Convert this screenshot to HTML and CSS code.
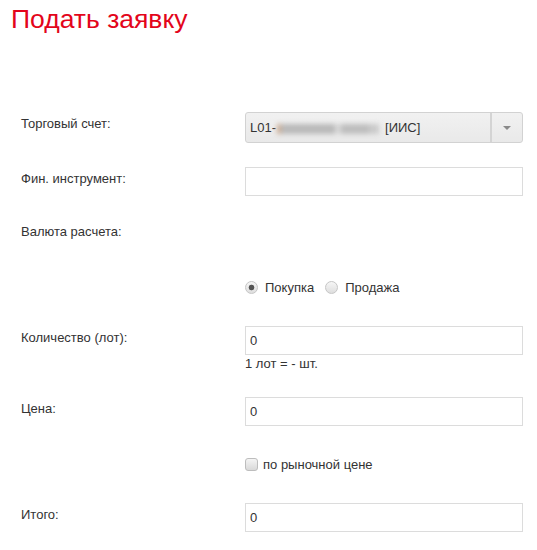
FILE: index.html
```html
<!DOCTYPE html>
<html lang="ru">
<head>
    <meta charset="UTF-8">
    <meta name="viewport" content="width=device-width, initial-scale=1.0">
    <title>Подать заявку</title>
    <link rel="stylesheet" href="styles.css">
</head>
<body>
    <h1 class="page-title">Подать заявку</h1>

    <form class="order-form">
        <!-- счет -->
        <div class="form-row">
            <label class="form-label">Торговый счет:</label>
            <div class="form-control">
                <div class="account-select">
                    <span class="account-value">L01-<span class="masked"></span>[ИИС]</span>
                    <span class="select-toggle"><span class="select-arrow"></span></span>
                </div>
            </div>
        </div>

        <!-- инструмент -->
        <div class="form-row">
            <label class="form-label" for="instrument">Фин. инструмент:</label>
            <div class="form-control">
                <input type="text" id="instrument" class="text-input">
            </div>
        </div>

        <!-- валюта -->
        <div class="form-row">
            <label class="form-label">Валюта расчета:</label>
            <div class="form-control"></div>
        </div>

        <!-- направление -->
        <div class="form-row">
            <span class="form-label"></span>
            <div class="form-control choice-line">
                <label class="choice"><input type="radio" name="side" checked> Покупка</label>
                <label class="choice"><input type="radio" name="side"> Продажа</label>
            </div>
        </div>

        <!-- количество -->
        <div class="form-row">
            <label class="form-label" for="qty">Количество (лот):</label>
            <div class="form-control">
                <input type="text" id="qty" class="text-input" value="0">
                <div class="hint">1 лот = - шт.</div>
            </div>
        </div>

        <!-- цена -->
        <div class="form-row">
            <label class="form-label" for="price">Цена:</label>
            <div class="form-control">
                <input type="text" id="price" class="text-input" value="0">
            </div>
        </div>

        <div class="form-row">
            <span class="form-label"></span>
            <div class="form-control choice-line">
                <label class="choice choice-box"><input type="checkbox"> по рыночной цене</label>
            </div>
        </div>

        <!-- итого -->
        <div class="form-row">
            <label class="form-label" for="total">Итого:</label>
            <div class="form-control">
                <input type="text" id="total" class="text-input" value="0">
            </div>
        </div>
    </form>
</body>
</html>
```

FILE: styles.css
```css
/* общие настройки страницы */
body {
    margin: 0;
    font-family: "Liberation Sans", Arial, sans-serif;
    font-size: 13px;
    color: #333;
    background: #fff;
}

/* заголовок */
.page-title {
    margin: 0;
    padding: 4px 0 0 11px;
    font-size: 26.5px;
    font-weight: normal;
    line-height: 30px;
    color: #e3051b;
}

/* форма заявки */
.order-form {
    padding: 78px 0 0 21px;
}

.form-row {
    display: grid;
    grid-template-columns: 224px 278px;
    min-height: 29px;
    margin-bottom: 24px;
}

.form-label {
    padding-top: 3px;
    line-height: 18px;
}

.form-control {
    min-height: 29px;
}

/* текстовые поля */
.text-input {
    display: block;
    width: 100%;
    height: 29px;
    box-sizing: border-box;
    margin: 0;
    padding: 0 4px;
    border: 1px solid #dcdcdc;
    font-family: inherit;
    font-size: 13px;
    color: #333;
    outline: none;
}

.hint {
    line-height: 18px;
}

/* выбор счета */
.account-select {
    display: flex;
    height: 31px;
    box-sizing: border-box;
    border: 1px solid #d2d2d2;
    border-radius: 3px;
    background: linear-gradient(#f1f1f1, #e9e9e9);
}

.account-value {
    flex: 1;
    padding-left: 4px;
    line-height: 29px;
    white-space: nowrap;
}

/* скрытая часть номера счета */
.masked {
    display: inline-block;
    width: 104px;
    height: 10px;
    margin: 0 4px 0 1px;
    vertical-align: middle;
    background: linear-gradient(90deg, #cfae94 0 4px, #b9b9b9 4px 58px, #d8d8d8 58px 64px, #bdbdbd 64px 92px, #cacaca 92px 102px, transparent 102px);
    filter: blur(2.5px);
}

.select-toggle {
    display: flex;
    align-items: center;
    justify-content: center;
    width: 30px;
    border-left: 2px solid #d4d4d4;
}

.select-arrow {
    width: 0;
    height: 0;
    border-left: 4px solid transparent;
    border-right: 4px solid transparent;
    border-top: 4px solid #8a8a8a;
}

/* радио и чекбокс */
.choice-line {
    display: flex;
    align-items: center;
    gap: 11px;
}

.choice {
    display: flex;
    align-items: center;
    gap: 7px;
}

.choice input {
    appearance: none;
    -webkit-appearance: none;
    width: 13px;
    height: 13px;
    margin: 0;
    border: 1px solid #c6c6c6;
    border-radius: 50%;
    background: linear-gradient(#f6f6f6, #dedede);
}

.choice input[type="radio"]:checked {
    background: radial-gradient(circle, #555 0 2.5px, transparent 3.2px), linear-gradient(#f6f6f6, #dedede);
}

.choice-box {
    gap: 5px;
}

.choice input[type="checkbox"] {
    border-radius: 3px;
    border-color: #bdbdbd;
    background: linear-gradient(#f4f4f4, #d9d9d9);
}
```
